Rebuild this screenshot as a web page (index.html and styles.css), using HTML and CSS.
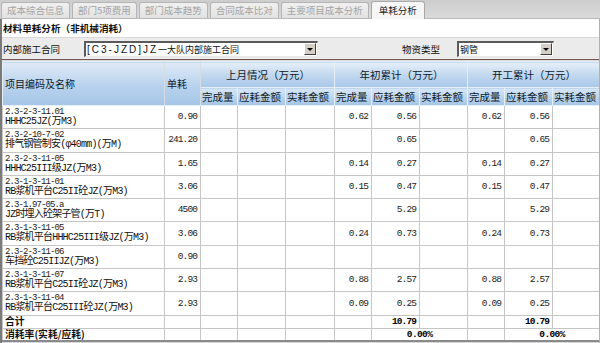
FILE: index.html
```html
<!DOCTYPE html>
<html lang="zh">
<head>
<meta charset="utf-8">
<title>单耗分析</title>
<link rel="stylesheet" href="styles.css">
</head>
<body>
<div class="app">
  <div class="tabs">
    <span class="tab">成本综合信息</span>
    <span class="tab">部门5项费用</span>
    <span class="tab">部门成本趋势</span>
    <span class="tab">合同成本比对</span>
    <span class="tab">主要项目成本分析</span>
    <span class="tab active">单耗分析</span>
  </div>
  <div class="panel">
    <div class="title">材料单耗分析（非机械消耗）</div>
    <div class="filters">
      <span class="flabel">内部施工合同</span>
      <span class="select sel-contract"><span class="sel-text"><span class="sel-code">[C3-JZD]JZ</span>一大队内部施工合同</span><span class="sel-btn"><i class="tri"></i></span></span>
      <span class="flabel flabel-type">物资类型</span>
      <span class="select sel-type"><span class="sel-text">钢管</span><span class="sel-btn"><i class="tri"></i></span></span>
    </div>
    <table class="grid">
      <colgroup>
        <col class="c-name"><col class="c-unit">
        <col class="c-q"><col class="c-m"><col class="c-m2">
        <col class="c-q"><col class="c-m"><col class="c-m">
        <col class="c-q"><col class="c-m"><col class="c-m3">
      </colgroup>
      <thead>
        <tr class="h1">
          <th rowspan="2" class="hl">项目编码及名称</th>
          <th rowspan="2" class="hl">单耗</th>
          <th colspan="3" class="grp">上月情况（万元）</th>
          <th colspan="3" class="grp">年初累计（万元）</th>
          <th colspan="3" class="grp">开工累计（万元）</th>
        </tr>
        <tr class="h2">
          <th>完成量</th><th>应耗金额</th><th>实耗金额</th>
          <th>完成量</th><th>应耗金额</th><th>实耗金额</th>
          <th>完成量</th><th>应耗金额</th><th>实耗金额</th>
        </tr>
      </thead>
      <tbody>
        <tr class="d"><td class="nm"><div class="code">2.3-2-3-11.01</div><div class="name">HHHC25JZ(万M3)</div></td><td class="n">0.90</td><td></td><td></td><td></td><td class="n">0.62</td><td class="n">0.56</td><td></td><td class="n">0.62</td><td class="n">0.56</td><td></td></tr>
        <tr class="d"><td class="nm"><div class="code">2.3-2-10-7-02</div><div class="name">排气钢管制安(φ40mm)(万M)</div></td><td class="n">241.20</td><td></td><td></td><td></td><td></td><td class="n">0.65</td><td></td><td></td><td class="n">0.65</td><td></td></tr>
        <tr class="d"><td class="nm"><div class="code">2.3-2-3-11-05</div><div class="name">HHHC25III级JZ(万M3)</div></td><td class="n">1.65</td><td></td><td></td><td></td><td class="n">0.14</td><td class="n">0.27</td><td></td><td class="n">0.14</td><td class="n">0.27</td><td></td></tr>
        <tr class="d"><td class="nm"><div class="code">2.3-1-3-11-01</div><div class="name">RB浆机平台C25II砼JZ(万M3)</div></td><td class="n">3.06</td><td></td><td></td><td></td><td class="n">0.15</td><td class="n">0.47</td><td></td><td class="n">0.15</td><td class="n">0.47</td><td></td></tr>
        <tr class="d"><td class="nm"><div class="code">2.3-1.97-05.a</div><div class="name">JZ时埋入砼架子管(万T)</div></td><td class="n">4500</td><td></td><td></td><td></td><td></td><td class="n">5.29</td><td></td><td></td><td class="n">5.29</td><td></td></tr>
        <tr class="d"><td class="nm"><div class="code">2.3-1-3-11-05</div><div class="name">RB浆机平台HHHC25III级JZ(万M3)</div></td><td class="n">3.06</td><td></td><td></td><td></td><td class="n">0.24</td><td class="n">0.73</td><td></td><td class="n">0.24</td><td class="n">0.73</td><td></td></tr>
        <tr class="d"><td class="nm"><div class="code">2.3-2-3-11-06</div><div class="name">车挡砼C25IIJZ(万M3)</div></td><td class="n">0.90</td><td></td><td></td><td></td><td></td><td></td><td></td><td></td><td></td><td></td></tr>
        <tr class="d"><td class="nm"><div class="code">2.3-1-3-11-07</div><div class="name">RB浆机平台C25II砼JZ(万M3)</div></td><td class="n">2.93</td><td></td><td></td><td></td><td class="n">0.88</td><td class="n">2.57</td><td></td><td class="n">0.88</td><td class="n">2.57</td><td></td></tr>
        <tr class="d"><td class="nm"><div class="code">2.3-1-3-11-04</div><div class="name">RB浆机平台C25III砼JZ(万M3)</div></td><td class="n">2.93</td><td></td><td></td><td></td><td class="n">0.09</td><td class="n">0.25</td><td></td><td class="n">0.09</td><td class="n">0.25</td><td></td></tr>
        <tr class="t"><td class="tl">合计</td><td></td><td></td><td></td><td></td><td></td><td class="n b">10.79</td><td></td><td></td><td class="n b">10.79</td><td></td></tr>
        <tr class="t"><td class="tl">消耗率(实耗/应耗)</td><td></td><td></td><td></td><td></td><td></td><td colspan="2" class="ctr b">0.00%</td><td></td><td colspan="2" class="ctr b">0.00%</td></tr>
      </tbody>
    </table>
  </div>
</div>
</body>
</html>
```

FILE: styles.css
```css
html, body {
  margin: 0;
  padding: 0;
}
body {
  width: 600px;
  height: 343px;
  overflow: hidden;
  background: #d2d2d2;
  font-family: "Noto Sans CJK SC", "Liberation Sans", sans-serif;
  color: #111;
}
.app {
  width: 600px;
  height: 343px;
  display: flex;
  flex-direction: column;
}
.tabs {
  height: 19px;
  flex: none;
  box-sizing: border-box;
  display: flex;
  align-items: flex-end;
  gap: 2px;
  padding-left: 1px;
  background: linear-gradient(#cdcdcd, #dadada);
  border-bottom: 1px solid #b8b8b8;
}
.tab {
  height: 16px;
  box-sizing: border-box;
  padding: 0 5px;
  font-size: 9.5px;
  line-height: 15px;
  color: #a4a4a4;
  background: linear-gradient(#f0f0f0, #e2e2e2);
  border: 1px solid #b4b4b4;
  border-bottom: none;
  border-radius: 3px 3px 0 0;
  white-space: nowrap;
}
.tab.active {
  height: 18px;
  margin-bottom: -1px;
  line-height: 17px;
  color: #222;
  padding: 0 7px;
  background: #f6f6f6;
  border-color: #a8a8a8;
}
.panel {
  flex: 1;
  display: flex;
  flex-direction: column;
  border-left: 2px solid #7a7a7a;
  border-right: 1px solid #b0b0b0;
  background: #d8d8d8;
  overflow: hidden;
}
.title {
  flex: none;
  height: 18px;
  line-height: 18px;
  padding-left: 1px;
  font-size: 9.6px;
  font-weight: bold;
  background: #fff;
  border-bottom: 1px solid #d8d8d8;
}
.filters {
  flex: none;
  height: 21px;
  display: flex;
  align-items: center;
  background: #ebebeb;
  border-bottom: 1px solid #7b5454;
  margin-bottom: 1px;
}
.flabel {
  width: 81px;
  padding-left: 1px;
  font-size: 9.5px;
  color: #111;
}
.flabel-type {
  width: 55px;
  margin-left: 83px;
}
.select {
  height: 16px;
  box-sizing: border-box;
  display: flex;
  align-items: center;
  background: #fff;
  border-top: 2px solid #5a5a5a;
  border-left: 2px solid #5a5a5a;
  border-right: 1px solid #e8e8e8;
  border-bottom: 1px solid #e8e8e8;
}
.sel-contract { width: 234px; }
.sel-type { width: 97px; }
.sel-text {
  flex: 1;
  padding-left: 1px;
  font-size: 9px;
  line-height: 13px;
  white-space: nowrap;
  overflow: hidden;
}
.sel-code {
  font-family: "Liberation Sans", sans-serif;
  font-size: 10px;
  letter-spacing: 2px;
}
.sel-btn {
  width: 12px;
  height: 12px;
  margin-right: 1px;
  box-sizing: border-box;
  display: flex;
  align-items: center;
  justify-content: center;
  background: #d4d0c8;
  border: 1px solid;
  border-color: #fff #404040 #404040 #fff;
}
.tri {
  width: 0;
  height: 0;
  border-left: 3px solid transparent;
  border-right: 3px solid transparent;
  border-top: 3px solid #000;
}
.grid {
  flex: none;
  width: 597px;
  table-layout: fixed;
  border-collapse: collapse;
  border-bottom: 2px solid #8a8a8a;
}
.c-name { width: 162px; }
.c-unit { width: 36px; }
.c-q { width: 37px; }
.c-m { width: 48px; }
.c-m2 { width: 49px; }
.c-m3 { width: 47px; }
.grid th {
  padding: 0 0 0 1px;
  font-weight: normal;
  font-size: 10.5px;
  color: #0e1a2a;
  text-align: left;
  white-space: nowrap;
  overflow: hidden;
  border: 1px solid #e6eef8;
  background: linear-gradient(#dfeaf6, #b8d2ee 55%, #a5c5e7);
}
.grid th.hl {
  font-size: 10px;
  padding-left: 2px;
  border-right-color: #d8dde4;
}
.grid .h1 th.grp {
  height: 25px;
  text-align: center;
  background: linear-gradient(#e6eff9, #c2d8ef 50%, #a9c8e8);
}
.grid .h2 th {
  height: 17px;
  background: linear-gradient(#d7e6f5, #a4c5e7);
}
.grid td {
  padding: 0;
  border: 1px solid #c6c6c6;
  background: #fff;
  white-space: nowrap;
  overflow: hidden;
}
.grid tr.d {
  height: 23.3px;
}
.grid td.nm {
  vertical-align: top;
  padding: 2px 0 0 2px;
}
.code {
  font-family: "Liberation Mono", monospace;
  font-size: 9px;
  letter-spacing: -0.9px;
  line-height: 9px;
  color: #222;
}
.name {
  font-family: "Liberation Mono", "Noto Sans CJK SC", monospace;
  font-size: 10px;
  letter-spacing: -0.8px;
  line-height: 10px;
  color: #111;
}
.grid td.n {
  text-align: right;
  padding-right: 3px;
  font-family: "Liberation Mono", monospace;
  font-size: 9.5px;
  letter-spacing: -0.9px;
  line-height: 10px;
  color: #222;
}
.grid tr.t {
  height: 13px;
}
.grid tr.t td {
  line-height: 11px;
}
.grid td.tl {
  padding-left: 2px;
  font-size: 9.8px;
  font-weight: bold;
}
.grid td.b {
  font-weight: bold;
  color: #000;
}
.grid td.ctr {
  text-align: center;
  font-family: "Liberation Mono", monospace;
  font-size: 9.5px;
  letter-spacing: -0.6px;
}
```
